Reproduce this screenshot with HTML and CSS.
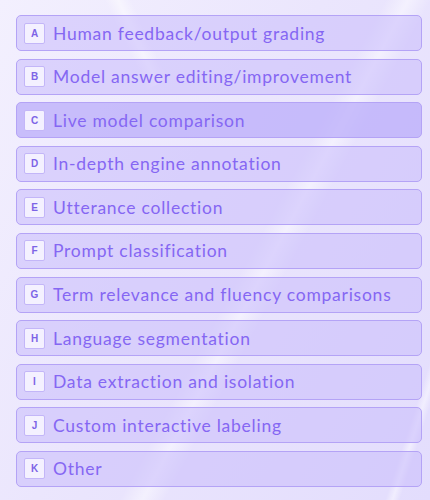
FILE: index.html
```html
<!DOCTYPE html>
<html lang="en">
<head>
    <meta charset="UTF-8">
    <meta name="viewport" content="width=device-width, initial-scale=1.0">
    <title>Task types</title>
    <link rel="stylesheet" href="styles.css">
</head>
<body>
    <div class="streaks">
        <span class="streak one"></span>
        <span class="streak two"></span>
        <span class="streak three"></span>
    </div>

    <ul class="options">
        <li class="option"><span class="key">A</span>Human feedback/output grading</li>
        <li class="option"><span class="key">B</span>Model answer editing/improvement</li>
        <li class="option selected"><span class="key">C</span>Live model comparison</li>
        <li class="option"><span class="key">D</span>In-depth engine annotation</li>
        <li class="option"><span class="key">E</span>Utterance collection</li>
        <li class="option"><span class="key">F</span>Prompt classification</li>
        <li class="option"><span class="key">G</span>Term relevance and fluency comparisons</li>
        <li class="option"><span class="key">H</span>Language segmentation</li>
        <li class="option"><span class="key">I</span>Data extraction and isolation</li>
        <li class="option"><span class="key">J</span>Custom interactive labeling</li>
        <li class="option"><span class="key">K</span>Other</li>
    </ul>
</body>
</html>
```

FILE: styles.css
```css
* {
    margin: 0;
    padding: 0;
    box-sizing: border-box;
}

html, body {
    height: 100%;
}

body {
    font-family: 'Lato', 'Liberation Sans', sans-serif;
    background: linear-gradient(120deg, #f3f0fe 0%, #ebe6fd 45%, #e3ddfd 100%);
    overflow: hidden;
    position: relative;
}

.streaks {
    position: absolute;
    inset: 0;
    overflow: hidden;
    pointer-events: none;
}

.streak {
    position: absolute;
    display: block;
    background: linear-gradient(90deg, rgba(255, 255, 255, 0), rgba(255, 255, 255, 0.8), rgba(255, 255, 255, 0));
}

.streak.one {
    left: 250px;
    top: -60px;
    width: 40px;
    height: 640px;
    transform: rotate(28deg);
    opacity: 0.6;
}

.streak.two {
    left: 120px;
    top: -30px;
    width: 24px;
    height: 120px;
    transform: rotate(-25deg);
    opacity: 0.6;
}

.streak.three {
    left: 405px;
    top: 330px;
    width: 14px;
    height: 220px;
    transform: rotate(18deg);
    opacity: 0.6;
}

.options {
    position: relative;
    list-style: none;
    display: flex;
    flex-direction: column;
    gap: 7.6px;
    padding: 15px 8px 0 16px;
}

.option {
    display: flex;
    align-items: center;
    height: 36px;
    padding: 0 7px;
    background: rgba(200, 188, 252, 0.55);
    border: 1px solid #b4a3f6;
    border-radius: 5px;
    color: #8567f3;
    font-size: 17.5px;
    letter-spacing: 0.75px;
}

.option.selected {
    background: rgba(184, 170, 250, 0.72);
}

.key {
    display: flex;
    flex-shrink: 0;
    align-items: center;
    justify-content: center;
    width: 21px;
    height: 21px;
    margin-right: 8px;
    background: #f4f1ff;
    border: 1px solid #c3b6f8;
    border-radius: 2px;
    color: #7d64e6;
    font-family: 'Liberation Sans', sans-serif;
    font-size: 10px;
    font-weight: bold;
    letter-spacing: 0;
}
```
